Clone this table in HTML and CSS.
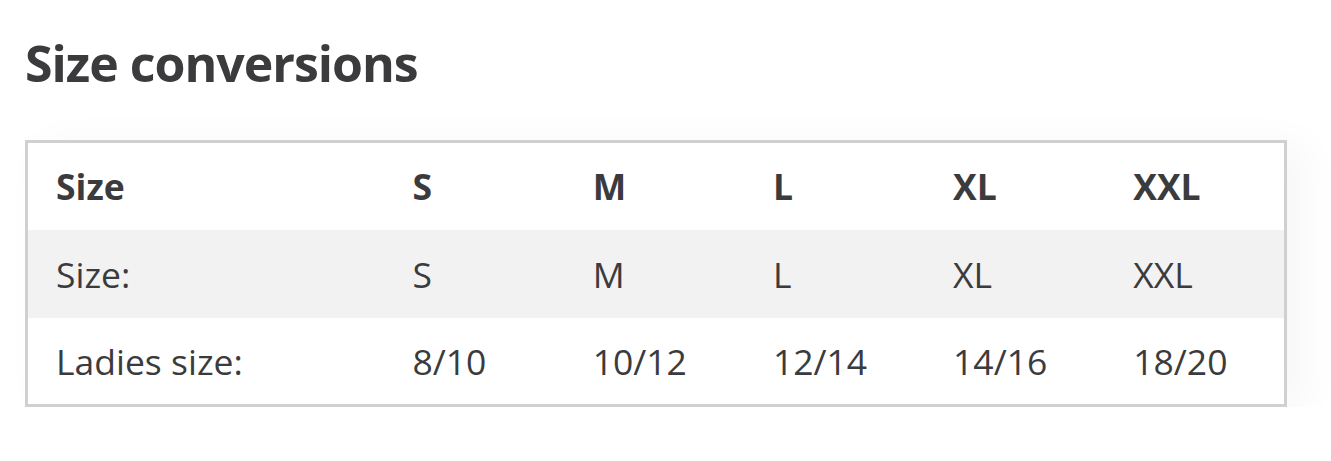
FILE: index.html
```html
<!DOCTYPE html>
<html>
<head>
<meta charset="utf-8">
<link rel="stylesheet" href="styles.css">
</head>
<body>
<div class="page">
  <h2 class="title">Size conversions</h2>
  <table class="sizes">
    <colgroup>
      <col class="c-label"><col class="c-size"><col class="c-size"><col class="c-size"><col class="c-size"><col class="c-size">
    </colgroup>
    <thead>
      <tr><th>Size</th><th>S</th><th>M</th><th>L</th><th>XL</th><th>XXL</th></tr>
    </thead>
    <tbody>
      <tr class="alt"><td>Size:</td><td>S</td><td>M</td><td>L</td><td>XL</td><td>XXL</td></tr>
      <tr><td>Ladies size:</td><td>8/10</td><td>10/12</td><td>12/14</td><td>14/16</td><td>18/20</td></tr>
    </tbody>
  </table>
</div>
</body>
</html>
```
FILE: styles.css
```css
html, body { margin: 0; padding: 0; background: #fff; }
body { font-family: "Open Sans", "Liberation Sans", sans-serif; color: #3b3b3e; }
.page { padding: 26px 0 0 25px; }
.title {
  margin: 0 0 40px 0;
  font-size: 50px;
  font-weight: 700;
  letter-spacing: -1px;
  line-height: 74px;
  color: #3b3b3e;
}
.sizes {
  width: 1262px;
  border-collapse: collapse;
  border: 3px solid #d0d0d0;
  table-layout: fixed;
  box-shadow: 18px 4px 40px rgba(0,0,0,0.035);
}
.c-label { width: 358px; }
.sizes th, .sizes td {
  height: 88px;
  padding: 0 0 0 28px;
  text-align: left;
  font-size: 35.5px;
  vertical-align: middle;
  box-sizing: border-box;
}
.sizes th { font-weight: 700; }
.sizes td { font-weight: 400; }
.sizes tr.alt td { background: #f2f2f2; }
```
